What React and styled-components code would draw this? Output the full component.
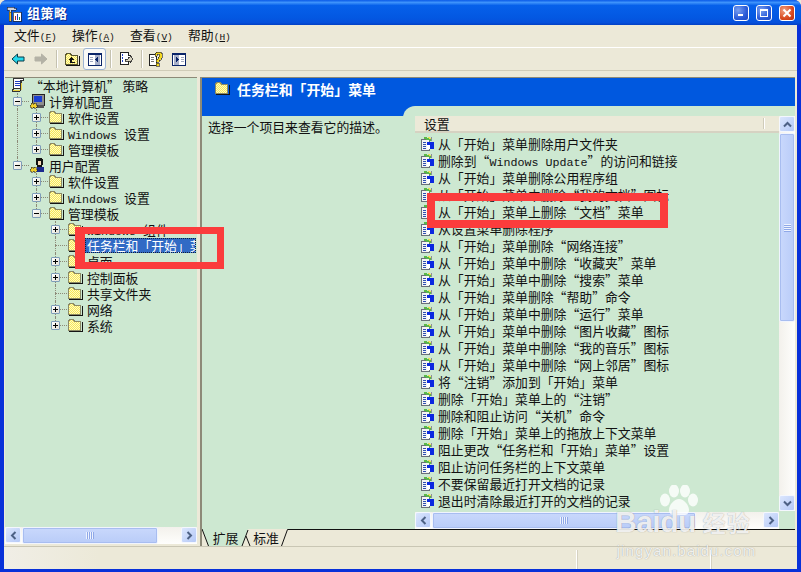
import React from 'react';
import styled, { createGlobalStyle } from 'styled-components';

const GlobalStyle = createGlobalStyle`
  html, body { margin: 0; padding: 0; background: #ece9d8; }
  body { font-family: "Noto Sans CJK SC", "Liberation Sans", sans-serif; font-size: 12.85px; color: #111; }
`;

const GREEN = '#cde8d1';
const BEIGE = '#ece9d8';

const Window = styled.div`
  position: relative;
  width: 801px;
  height: 572px;
  overflow: hidden;
  display: flex;
  flex-direction: column;
  background: #0831d9;
  border-radius: 7px 7px 0 0;
`;

const TitleBar = styled.div`
  height: 25px;
  flex: none;
  display: flex;
  align-items: center;
  padding: 0 6px 0 6px;
  gap: 5px;
  background: linear-gradient(180deg, #0a5ae8 0%, #3d92fb 10%, #0660ea 22%, #0358e2 70%, #0550dc 90%, #0340c4 100%);
`;

const TitleText = styled.span`
  flex: 1;
  color: #fff;
  font-size: 13px;
  font-weight: 700;
  letter-spacing: 0.5px;
  text-shadow: 1px 1px 0 #0a2a90;
`;

const CaptionBtn = styled.div`
  width: 16px;
  height: 16px;
  margin-left: 2px;
  box-sizing: border-box;
  border: 1px solid #fff;
  border-radius: 3px;
  display: flex;
  align-items: center;
  justify-content: center;
  background: ${p => p.$close
    ? 'radial-gradient(circle at 30% 30%, #f0a080, #d8491f 60%, #b83010)'
    : 'radial-gradient(circle at 30% 30%, #7aa0f0, #2a5bd8 60%, #1c48c0)'};
`;

const Inner = styled.div`
  flex: 1;
  min-height: 0;
  margin: 0 4px 3px 4px;
  background: ${BEIGE};
  display: flex;
  flex-direction: column;
`;

const MenuBar = styled.div`
  height: 23px;
  flex: none;
  display: flex;
  align-items: center;
  padding-left: 10px;
  border-bottom: 1px solid #fff;
  box-sizing: border-box;
`;

const MenuItem = styled.span`
  width: 58px;
  white-space: nowrap;
  line-height: 16px;
`;

const Latin = styled.span`
  font-family: "Liberation Mono", monospace;
  font-size: ${p => p.$small ? '9.5px' : '11.7px'};
`;

const Hotkey = styled.u`
  text-underline-offset: 1px;
`;

const Toolbar = styled.div`
  height: 23px;
  flex: none;
  box-sizing: border-box;
  display: flex;
  align-items: center;
  padding-left: 2px;
  margin-bottom: 6px;
  border-bottom: 1px solid #d0ccb8;
`;

const Tool = styled.div`
  width: 23px;
  height: 22px;
  box-sizing: border-box;
  display: flex;
  align-items: center;
  justify-content: center;
  ${p => p.$on && `
    background: #f9f9f6;
    border: 1px solid #9db4d4;
    border-radius: 3px;
  `}
`;

const ToolSep = styled.div`
  width: ${p => p.$width}px;
  height: 18px;
  display: flex;
  justify-content: center;
  &::before {
    content: '';
    width: 1px;
    background: #c5c2b0;
    box-shadow: 1px 0 0 #fff;
  }
`;

const Panes = styled.div`
  flex: 1;
  min-height: 0;
  display: flex;
  padding-left: 1px;
`;

const TreePane = styled.div`
  width: 192px;
  flex: none;
  overflow: hidden;
  display: flex;
  flex-direction: column;
  background: ${GREEN};
  border-top: 1px solid #8d8a78;
  border-bottom: 2px solid ${BEIGE};
  box-sizing: border-box;
`;

const Tree = styled.div`
  flex: 1;
  min-height: 0;
  margin-top: -1px;
`;

const TreeRow = styled.div`
  height: 16px;
  display: flex;
  align-items: center;
  padding-left: 3px;
  white-space: nowrap;
`;

const Guide = styled.div`
  width: 19px;
  height: 16px;
  flex: none;
  position: relative;
  ${p => p.$on && `
    &::before {
      content: '';
      position: absolute;
      left: 9px;
      top: 0;
      bottom: 0;
      border-left: 1px dotted #8d8a78;
    }
  `}
`;

const Joint = styled(Guide)`
  &::before {
    content: '';
    position: absolute;
    left: 9px;
    top: 0;
    bottom: ${p => p.$last ? '8px' : '0'};
    border-left: 1px dotted #8d8a78;
  }
  &::after {
    content: '';
    position: absolute;
    left: 9px;
    right: -2px;
    top: 8px;
    border-top: 1px dotted #8d8a78;
  }
`;

const Expander = styled.div`
  position: absolute;
  z-index: 1;
  left: 5px;
  top: 4px;
  width: 9px;
  height: 9px;
  box-sizing: border-box;
  border: 1px solid #7f9db9;
  border-radius: 1px;
  background: linear-gradient(135deg, #fff, #e4e2d6);
  &::before {
    content: '';
    position: absolute;
    left: 1px;
    top: 3px;
    width: 5px;
    height: 1px;
    background: #000;
  }
  ${p => !p.$open && `
    &::after {
      content: '';
      position: absolute;
      left: 3px;
      top: 1px;
      width: 1px;
      height: 5px;
      background: #000;
    }
  `}
`;

const NodeIcon = styled.div`
  width: 16px;
  height: 16px;
  flex: none;
  margin: 0 2px;
  position: relative;
  z-index: 1;
  display: flex;
  align-items: center;
`;

const NodeLabel = styled.span`
  height: 15px;
  line-height: 15px;
  padding: 0 2px;
  ${p => p.$selected && `
    background: #316ac5;
    color: #fff;
    outline: 1px dotted #10203c;
    outline-offset: -1px;
    width: 111px;
    flex: none;
    box-sizing: border-box;
    overflow: hidden;
  `}
`;

const Splitter = styled.div`
  width: 5px;
  flex: none;
  background: ${BEIGE};
  border-right: 2px solid #8d8a78;
  box-sizing: border-box;
`;

const RightPane = styled.div`
  width: 593px;
  flex: none;
  display: flex;
  flex-direction: column;
  background: ${GREEN};
  border-top: 1px solid #8d8a78;
  box-sizing: border-box;
`;

const Banner = styled.div`
  height: 38px;
  flex: none;
  box-sizing: border-box;
  background: #0058df;
  display: flex;
  align-items: flex-start;
  padding: 3px 0 0 12px;
  gap: 7px;
  color: #fff;
  font-weight: 700;
  font-size: 13.9px;
  line-height: 17px;
`;

const Extended = styled.div`
  flex: 1;
  min-height: 0;
  display: flex;
`;

const Description = styled.div`
  width: 201px;
  flex: none;
  padding: 3px 0 0 6px;
  box-sizing: border-box;
  line-height: 16px;
  white-space: nowrap;
`;

const ListColumn = styled.div`
  flex: 1;
  min-width: 0;
  margin-top: -10px;
  padding: 10px 0 0 12px;
  background: ${GREEN};
  border-radius: 12px 0 0 0;
  position: relative;
  display: flex;
  flex-direction: column;
`;

const ListBody = styled.div`
  flex: 1;
  min-height: 0;
  display: flex;
`;

const ListMain = styled.div`
  width: 364px;
  flex: none;
  display: flex;
  flex-direction: column;
`;

const ColumnHeader = styled.div`
  height: 17px;
  flex: none;
  box-sizing: border-box;
  background: ${BEIGE};
  border-bottom: 2px solid #d6d2c2;
  display: flex;
  align-items: center;
  padding-left: 9px;
  position: relative;
  line-height: 15px;
  &::after {
    content: '';
    position: absolute;
    right: 14px;
    top: 2px;
    bottom: 2px;
    width: 1px;
    background: #fff;
    box-shadow: -1px 0 0 #cfccba;
  }
`;

const Settings = styled.div`
  flex: 1;
  min-height: 0;
  overflow: hidden;
  padding: 2px 0 0 5px;
`;

const SettingRow = styled.div`
  height: 17px;
  display: flex;
  align-items: center;
  gap: 3px;
  white-space: nowrap;
  line-height: 17px;
`;

const SettingText = styled.span`
  display: block;
  height: 17px;
`;

const Scroll = styled.div`
  display: flex;
  flex: none;
  flex-direction: ${p => p.$vertical ? 'column' : 'row'};
  ${p => p.$vertical ? 'width: 16px; height: 395px;' : 'height: 17px;'}
  background: linear-gradient(${p => p.$vertical ? '90deg' : '180deg'}, #f3f1ec, #fefefc);
  box-sizing: border-box;
`;

const ScrollBtn = styled.div`
  width: 16px;
  height: 16px;
  flex: none;
  box-sizing: border-box;
  border: 1px solid #f4f7fe;
  border-radius: 2px;
  background: linear-gradient(135deg, #dbe6fd, #b5c9f7);
  display: flex;
  align-items: center;
  justify-content: center;
`;

const ScrollThumb = styled.div`
  flex: none;
  box-sizing: border-box;
  ${p => p.$vertical ? `height: ${p.$size}px; margin: 1px 0;` : `width: ${p.$size}px; margin: 0 1px;`}
  border: 1px solid #f0f4fe;
  border-radius: 2px;
  background: linear-gradient(${p => p.$vertical ? '90deg' : '180deg'}, #c9d8fc, #b9ccf8);
  display: flex;
  align-items: center;
  justify-content: center;
  box-shadow: inset 0 0 0 1px #a8bdf0;
`;

const ScrollFill = styled.div`
  flex: 1;
`;

const Grip = styled.div`
  ${p => p.$vertical
    ? 'width: 7px; height: 8px; background: repeating-linear-gradient(180deg, #eef3fe 0 1px, #8fa8e8 1px 2px);'
    : 'width: 8px; height: 7px; background: repeating-linear-gradient(90deg, #eef3fe 0 1px, #8fa8e8 1px 2px);'}
`;

const TabStrip = styled.div`
  height: 17px;
  flex: none;
  display: flex;
  background: ${BEIGE};
`;

const Tab = styled.div`
  width: ${p => p.$width}px;
  flex: none;
  height: 17px;
  text-align: center;
  line-height: 17px;
  white-space: nowrap;
  background: ${p => p.$active ? GREEN : BEIGE};
`;

const TabRest = styled.div`
  flex: 1;
  border-top: 1px solid #111;
  box-sizing: border-box;
`;

const StatusBar = styled.div`
  height: 23px;
  flex: none;
  box-sizing: border-box;
  border-top: 1px solid #c9c6b4;
  background: linear-gradient(90deg, #f0eee6 0%, ${BEIGE} 12%);
  display: flex;
  padding-top: 3px;
`;

const StatusCell = styled.div`
  width: ${p => p.$width}px;
  flex: none;
  border-right: 1px solid #fff;
  box-shadow: 1px 0 0 #d6d2c2;
`;

const RedBox = styled.div`
  position: absolute;
  z-index: 5;
  box-sizing: border-box;
  border: 8px solid #fb3c3c;
`;

const TreeMark = styled(RedBox)`
  left: 75px;
  top: 227px;
  width: 149px;
  height: 42px;
  border-width: 7px 7px 7px 10px;
`;

const ListMark = styled(RedBox)`
  left: 427px;
  top: 193px;
  width: 241px;
  height: 35px;
  border-width: 8px;
`;

const Watermark = styled.div`
  position: absolute;
  z-index: 6;
  left: 615px;
  top: 485px;
  width: 160px;
  color: rgba(255, 255, 255, 0.85);
  text-shadow: 0 0 1px rgba(90, 90, 90, 0.6);
`;

const PawWrap = styled.div`
  display: flex;
  padding-left: 44px;
  height: 32px;
`;

const BrandLine = styled.div`
  display: flex;
  align-items: center;
  margin-top: -11px;
  font-family: "Liberation Sans", sans-serif;
  font-size: 30px;
  font-weight: 700;
  line-height: 32px;
  letter-spacing: -0.5px;
  white-space: nowrap;
`;

const BrandCn = styled.span`
  font-family: "Noto Sans CJK SC", sans-serif;
  font-size: 23px;
  margin-left: 7px;
  letter-spacing: 1px;
`;

const UrlLine = styled.div`
  font-family: "Liberation Sans", sans-serif;
  font-size: 15px;
  letter-spacing: 1.1px;
  line-height: 18px;
  margin-top: 4px;
  margin-left: 2px;
  white-space: nowrap;
`;

/* ---- icons ---- */

const Dither = () => (
  <defs>
    <pattern id="dither" width="2" height="2" patternUnits="userSpaceOnUse">
      <rect width="2" height="2" fill="#f6e65c" />
      <rect width="1" height="1" fill="#fffcc0" />
      <rect x="1" y="1" width="1" height="1" fill="#fffcc0" />
    </pattern>
  </defs>
);

const FolderIcon = () => (
  <svg width="16" height="14" viewBox="0 0 16 14" shapeRendering="crispEdges">
    <Dither />
    <path d="M1.5 12.5v-10h1v-1h4v1h1v1h6v9z" fill="url(#dither)" stroke="#8b8a66" />
    <path d="M2 13.5h13V4" fill="none" stroke="#151515" />
  </svg>
);

const ComputerIcon = () => (
  <svg width="16" height="16" viewBox="0 0 16 16" shapeRendering="crispEdges">
    <rect x="3" y="1" width="12" height="11" fill="#8e8e8e" stroke="#222" />
    <rect x="5" y="3" width="8" height="6" fill="#1a3fd0" />
    <rect x="3" y="12" width="12" height="3" fill="#555" />
    <path d="M2 10h2v1h1v-1h2v2h1v2H7v1H5v-1H4v1H2v-1H1v-2h1z" fill="#f0d030" stroke="#222" strokeWidth="0.5" />
  </svg>
);

const UserIcon = () => (
  <svg width="16" height="16" viewBox="0 0 16 16" shapeRendering="crispEdges">
    <rect x="8" y="10" width="7" height="5" fill="#1a2a90" />
    <path d="M7 1h6v1h1v6h-1v2H8V8H7z" fill="#111" />
    <rect x="9" y="4" width="3" height="4" fill="#f6d8b8" />
    <path d="M2 10h2v1h1v-1h2v2h1v2H7v1H5v-1H4v1H2v-1H1v-2h1z" fill="#f0d030" stroke="#222" strokeWidth="0.5" />
  </svg>
);

const PolicyRootIcon = () => (
  <svg width="16" height="16" viewBox="0 0 16 16" shapeRendering="crispEdges">
    <path d="M3.5 1.5h10v2h-2v8h-8z" fill="#fff" stroke="#333" />
    <path d="M5 4h5M5 6h5M5 8h5" stroke="#2040c0" />
    <path d="M10 3v10h-1v1H2v-2h2" fill="none" stroke="#333" />
    <path d="M11 6h1v7h-1zM3 13h7v1H3z" fill="#e8d040" />
  </svg>
);

const SettingIcon = () => (
  <svg width="15" height="16" viewBox="0 0 15 16" shapeRendering="crispEdges">
    <path d="M1.5 3.5h8v11h-8z" fill="#f4f4f4" stroke="#6a7078" />
    <path d="M3 6h3M3 8h3M3 10h3M3 12h3" stroke="#3050b0" />
    <rect x="7" y="6" width="7" height="7" fill="#0a28e0" />
    <rect x="7" y="9" width="3" height="4" fill="#fff" />
    <path d="M4 1h3v1h2v1h2v2H9V4H6V3H4z" fill="#58b848" />
    <path d="M8 1h2v1h1v1H9V2H8z" fill="#f0e050" />
    <rect x="11" y="1" width="1" height="4" fill="#8a8f98" />
  </svg>
);

const HammerIcon = () => (
  <svg width="16" height="18" viewBox="0 0 16 18" shapeRendering="crispEdges">
    <path d="M1 3h7v1h2v2H5v2H3V6H1z" fill="#d0d4dc" stroke="#203050" strokeWidth="0.7" />
    <rect x="3" y="8" width="2" height="9" fill="#f0c030" stroke="#402800" strokeWidth="0.5" />
    <rect x="7" y="8" width="8" height="9" fill="#fff" stroke="#222" strokeWidth="0.7" />
    <rect x="9" y="12" width="1" height="4" fill="#c02020" />
    <rect x="11" y="10" width="1" height="6" fill="#2040c0" />
    <rect x="13" y="13" width="1" height="3" fill="#208030" />
  </svg>
);

const ArrowIcon = ({ fill, stroke, flip }) => (
  <svg width="14" height="12" viewBox="0 0 14 12" style={flip ? { transform: 'scaleX(-1)' } : undefined}>
    <path d="M1 6l5.5-5v3H13v4H6.5v3z" fill={fill} stroke={stroke} strokeLinejoin="round" />
  </svg>
);

const FolderUpIcon = () => (
  <svg width="16" height="14" viewBox="0 0 16 14" shapeRendering="crispEdges">
    <Dither />
    <path d="M1.5 12.5v-10h1v-1h4v1h1v1h6v9z" fill="url(#dither)" stroke="#5a5830" />
    <path d="M2 13.5h13V4" fill="none" stroke="#151515" />
    <path d="M7 5L4 8h2v3h5v-1H8V8h2z" fill="#111" />
  </svg>
);

const PanelIcon = ({ right }) => (
  <svg width="14" height="13" viewBox="0 0 14 13" shapeRendering="crispEdges">
    <rect x="0.5" y="0.5" width="13" height="12" fill="#fff" stroke="#0a2468" />
    <rect x="1" y="1" width="12" height="1" fill="#0a2468" />
    {right
      ? <><rect x="2" y="2" width="5" height="10" fill="#a8b0c8" /><path d="M4 4l3 2.5L4 9z" fill="#0a2468" /><path d="M9 4h3M9 6h3M9 8h3" stroke="#a0a8c0" /></>
      : <><rect x="7" y="2" width="5" height="10" fill="#a8b0c8" /><path d="M10 4L7 6.5 10 9z" fill="#0a2468" /><path d="M2 4h3M2 6h3M2 8h3" stroke="#a0a8c0" /></>}
  </svg>
);

const ExportIcon = () => (
  <svg width="15" height="15" viewBox="0 0 15 15" shapeRendering="crispEdges">
    <path d="M1.5 0.5h8v3h2v3h-2v6h-8z" fill="#fff" stroke="#222" />
    <path d="M3 3h1M3 6h1M3 9h1" stroke="#2040c0" strokeWidth="2" />
    <path d="M9 5h2V3l3 4-3 4V9H6V7h3z" fill="#d8d4c0" stroke="#222" strokeWidth="0.8" />
  </svg>
);

const HelpIcon = () => (
  <svg width="16" height="16" viewBox="0 0 16 16" shapeRendering="crispEdges">
    <path d="M1.5 3.5h7v11h-7z" fill="#fff" stroke="#222" />
    <path d="M3 6h3M3 8h3M3 10h3" stroke="#777" />
    <path d="M8 1h5v1h1v5h-1v2h-2v2H8V8h2V6h1V3H9v2H7V2h1z" fill="#f4d820" stroke="#222" strokeWidth="0.6" />
    <rect x="8" y="12" width="3" height="3" fill="#f4d820" stroke="#222" strokeWidth="0.6" />
  </svg>
);

const Chevron = ({ dir }) => {
  const rot = { up: 0, down: 180, left: 270, right: 90 }[dir];
  return (
    <svg width="9" height="9" viewBox="0 0 9 9" style={{ transform: `rotate(${rot}deg)` }}>
      <path d="M1 6.5l3.5-3.5L8 6.5" fill="none" stroke="#4d6185" strokeWidth="2" />
    </svg>
  );
};

const Slant = ({ d, fill }) => (
  <svg width={d.w} height="17" viewBox={`0 0 ${d.w} 17`} style={{ flex: 'none', display: 'block' }}>
    {fill}
    <path d={d.path} fill="none" stroke="#111" />
  </svg>
);

const Paw = () => (
  <svg width="40" height="32" viewBox="0 0 40 32">
    <g fill="rgba(255,255,255,0.8)">
      <ellipse cx="6" cy="15" rx="5" ry="6.5" />
      <ellipse cx="15" cy="6" rx="5" ry="6.5" />
      <ellipse cx="26" cy="6" rx="5" ry="6.5" />
      <ellipse cx="34" cy="15" rx="5" ry="6.5" />
      <path d="M20 14c5 0 10 6 10 11 0 5-5 6-10 5-5 1-10 0-10-5 0-5 5-11 10-11z" />
    </g>
  </svg>
);

/* ---- data ---- */

const tree = [
  { level: 0, icon: 'root', root: true, label: <>“本地计算机”&thinsp;策略</> },
  { level: 1, icon: 'computer', guides: [], open: true, label: '计算机配置' },
  { level: 2, guides: [true], label: '软件设置' },
  { level: 2, guides: [true], label: <><Latin>Windows </Latin>设置</> },
  { level: 2, guides: [true], last: true, label: '管理模板' },
  { level: 1, icon: 'user', guides: [], open: true, last: true, label: '用户配置' },
  { level: 2, guides: [false], label: '软件设置' },
  { level: 2, guides: [false], label: <><Latin>Windows </Latin>设置</> },
  { level: 2, guides: [false], open: true, last: true, label: '管理模板' },
  { level: 3, guides: [false, false], label: <><Latin>Windows </Latin>组件</> },
  { level: 3, guides: [false, false], leaf: true, selected: true, label: '任务栏和「开始」菜单' },
  { level: 3, guides: [false, false], label: '桌面' },
  { level: 3, guides: [false, false], label: '控制面板' },
  { level: 3, guides: [false, false], leaf: true, label: '共享文件夹' },
  { level: 3, guides: [false, false], label: '网络' },
  { level: 3, guides: [false, false], last: true, label: '系统' },
];

const settings = [
  '从「开始」菜单删除用户文件夹',
  <>删除到“<Latin>Windows Update</Latin>”的访问和链接</>,
  '从「开始」菜单删除公用程序组',
  '从「开始」菜单中删除“我的文档”图标',
  '从「开始」菜单上删除“文档”菜单',
  '从设置菜单删除程序',
  '从「开始」菜单删除“网络连接”',
  '从「开始」菜单中删除“收藏夹”菜单',
  '从「开始」菜单中删除“搜索”菜单',
  '从「开始」菜单删除“帮助”命令',
  '从「开始」菜单中删除“运行”菜单',
  '从「开始」菜单中删除“图片收藏”图标',
  '从「开始」菜单中删除“我的音乐”图标',
  '从「开始」菜单中删除“网上邻居”图标',
  '将“注销”添加到「开始」菜单',
  '删除「开始」菜单上的“注销”',
  '删除和阻止访问“关机”命令',
  '删除「开始」菜单上的拖放上下文菜单',
  '阻止更改“任务栏和「开始」菜单”设置',
  '阻止访问任务栏的上下文菜单',
  '不要保留最近打开文档的记录',
  '退出时清除最近打开的文档的记录',
];

const menus = [['文件', 'F'], ['操作', 'A'], ['查看', 'V'], ['帮助', 'H']];

const nodeIcons = {
  root: <PolicyRootIcon />,
  computer: <ComputerIcon />,
  user: <UserIcon />,
};

const HScroll = ({ thumb }) => (
  <Scroll>
    <ScrollBtn><Chevron dir="left" /></ScrollBtn>
    <ScrollThumb $size={thumb}><Grip /></ScrollThumb>
    <ScrollFill />
    <ScrollBtn><Chevron dir="right" /></ScrollBtn>
  </Scroll>
);

const App = () => (
  <Window>
    <GlobalStyle />
    <TitleBar>
      <HammerIcon />
      <TitleText>组策略</TitleText>
      <CaptionBtn>
        <svg width="8" height="8" viewBox="0 0 8 8" shapeRendering="crispEdges"><rect x="1" y="5" width="5" height="2" fill="#fff" /></svg>
      </CaptionBtn>
      <CaptionBtn>
        <svg width="10" height="10" viewBox="0 0 10 10" shapeRendering="crispEdges"><path d="M1.5 2.5h7v6h-7z" fill="none" stroke="#fff" /><rect x="1" y="1" width="8" height="2" fill="#fff" /></svg>
      </CaptionBtn>
      <CaptionBtn $close>
        <svg width="10" height="10" viewBox="0 0 10 10"><path d="M1.5 1.5l7 7M8.5 1.5l-7 7" stroke="#fff" strokeWidth="2" /></svg>
      </CaptionBtn>
    </TitleBar>

    <Inner>
      <MenuBar>
        {menus.map(([name, key]) => (
          <MenuItem key={key}>{name}<Latin $small>(<Hotkey>{key}</Hotkey>)</Latin></MenuItem>
        ))}
      </MenuBar>

      <Toolbar>
        <Tool><ArrowIcon fill="#25d8ec" stroke="#0a3a48" /></Tool>
        <Tool><ArrowIcon fill="#b4b2a6" stroke="#b4b2a6" flip /></Tool>
        <ToolSep $width={8} />
        <Tool><FolderUpIcon /></Tool>
        <Tool $on><PanelIcon /></Tool>
        <ToolSep $width={9} />
        <Tool><ExportIcon /></Tool>
        <ToolSep $width={6} />
        <Tool><HelpIcon /></Tool>
        <Tool><PanelIcon right /></Tool>
      </Toolbar>

      <Panes>
        <TreePane>
          <Tree>
            {tree.map((n, i) => (
              <TreeRow key={i}>
                {(n.guides || []).map((on, g) => <Guide key={g} $on={on} />)}
                {!n.root && (
                  <Joint $last={n.last}>
                    {!n.leaf && <Expander $open={n.open} />}
                  </Joint>
                )}
                <NodeIcon>{n.icon ? nodeIcons[n.icon] : <FolderIcon />}</NodeIcon>
                <NodeLabel $selected={n.selected}>{n.label}</NodeLabel>
              </TreeRow>
            ))}
          </Tree>
          <HScroll thumb={136} />
        </TreePane>

        <Splitter />

        <RightPane>
          <Banner>
            <FolderIcon />
            <span>任务栏和「开始」菜单</span>
          </Banner>
          <Extended>
            <Description>选择一个项目来查看它的描述。</Description>
            <ListColumn>
              <ListBody>
                <ListMain>
                  <ColumnHeader>设置</ColumnHeader>
                  <Settings>
                    {settings.map((s, i) => (
                      <SettingRow key={i}><SettingIcon /><SettingText>{s}</SettingText></SettingRow>
                    ))}
                  </Settings>
                  <HScroll thumb={264} />
                </ListMain>
                <Scroll $vertical>
                  <ScrollBtn><Chevron dir="up" /></ScrollBtn>
                  <ScrollThumb $vertical $size={189}><Grip $vertical /></ScrollThumb>
                  <ScrollFill />
                  <ScrollBtn><Chevron dir="down" /></ScrollBtn>
                </Scroll>
              </ListBody>
            </ListColumn>
          </Extended>
          <TabStrip>
            <Slant
              d={{ w: 8, path: 'M0 0L6.5 17' }}
              fill={<path d="M0 0H8V17H6.5z" fill={GREEN} />}
            />
            <Tab $width={31} $active>扩展</Tab>
            <Slant
              d={{ w: 10, path: 'M1 17L7 1M5 7L9 17' }}
              fill={<path d="M0 0H7L1 17H0z" fill={GREEN} />}
            />
            <Tab $width={30}>标准</Tab>
            <Slant d={{ w: 7, path: 'M0.5 17L6.5 0.5H7' }} />
            <TabRest />
          </TabStrip>
        </RightPane>
      </Panes>

      <StatusBar>
        <StatusCell $width={572} />
        <StatusCell $width={133} />
      </StatusBar>
    </Inner>

    <TreeMark />
    <ListMark />

    <Watermark>
      <PawWrap><Paw /></PawWrap>
      <BrandLine>Baidu<BrandCn>经验</BrandCn></BrandLine>
      <UrlLine>jingyan.baidu.com</UrlLine>
    </Watermark>
  </Window>
);

export default App;
